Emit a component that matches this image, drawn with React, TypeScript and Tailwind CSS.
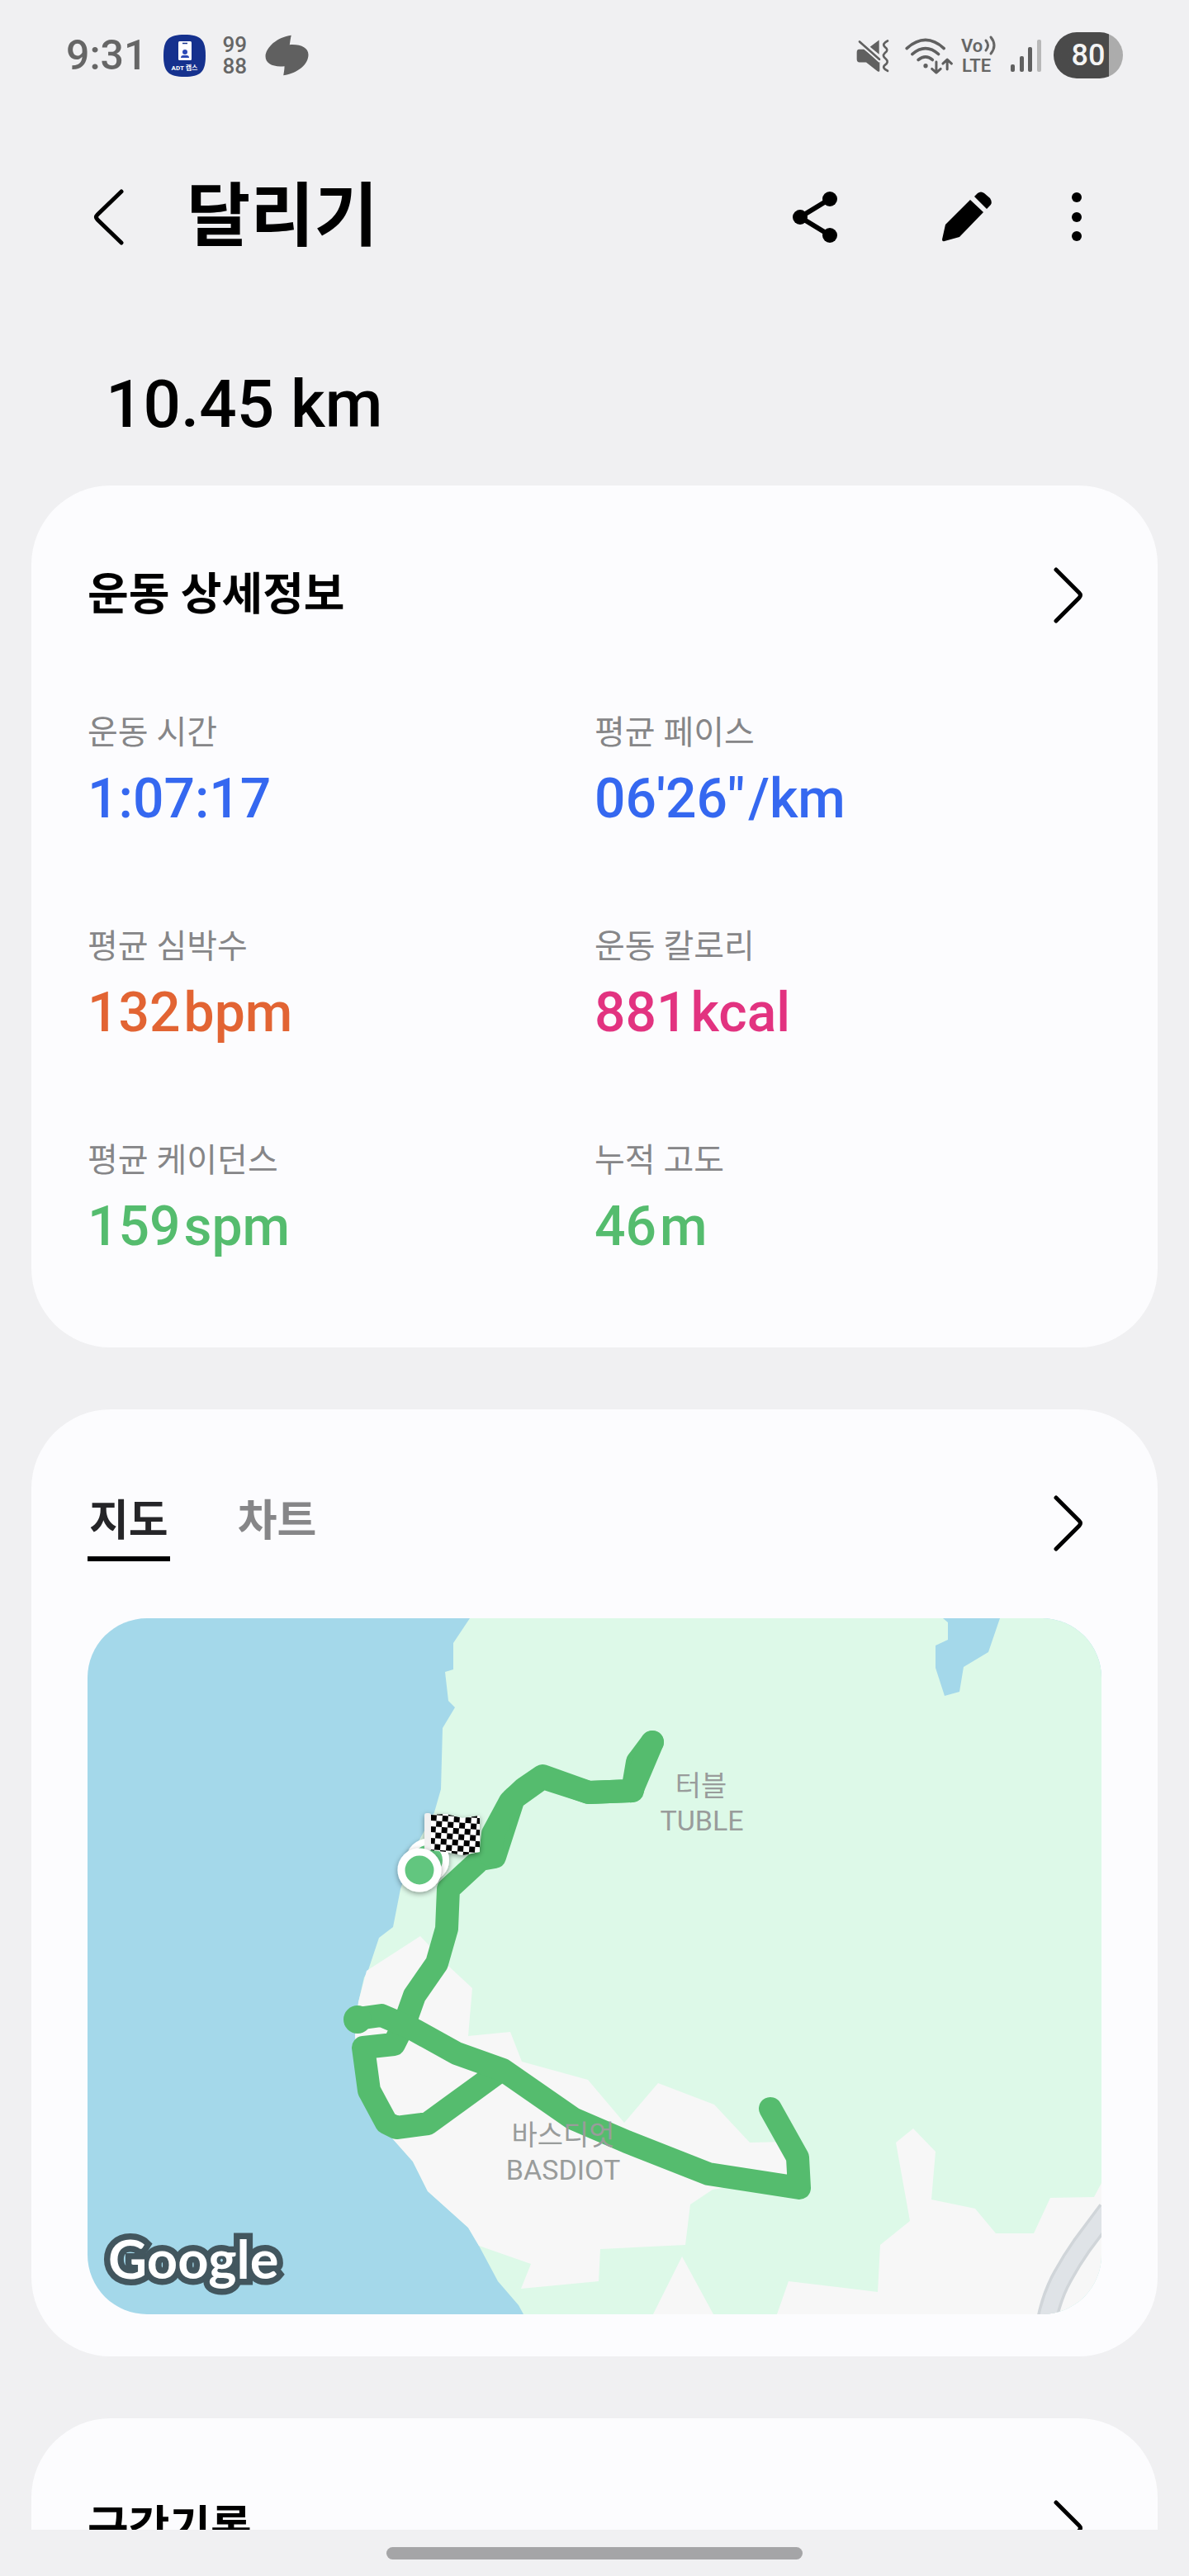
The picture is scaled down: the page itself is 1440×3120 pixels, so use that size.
import React from "react";

type Metric = { label: string; value: string; unit?: string; color: string };

const metrics: Metric[] = [
  { label: "운동 시간", value: "1:07:17", color: "text-[#3568f0]" },
  { label: "평균 페이스", value: "06'26\"", unit: "/km", color: "text-[#3568f0]" },
  { label: "평균 심박수", value: "132", unit: "bpm", color: "text-[#e26433]" },
  { label: "운동 칼로리", value: "881", unit: "kcal", color: "text-[#e23380]" },
  { label: "평균 케이던스", value: "159", unit: "spm", color: "text-[#55bc6e]" },
  { label: "누적 고도", value: "46", unit: "m", color: "text-[#55bc6e]" },
];

function ChevronRight() {
  return (
    <svg viewBox="0 0 36 68" className="h-[68px] w-9" fill="none" stroke="#000" strokeWidth="5" strokeLinecap="round" strokeLinejoin="round" aria-hidden="true">
      <path d="M3 3 L31 31 Q34 34 31 37 L3 65" />
    </svg>
  );
}

function CardLink({ label }: { label: string }) {
  return (
    <button type="button" aria-label={label} className="mr-[22px] h-[68px] shrink-0">
      <ChevronRight />
    </button>
  );
}

function StatusBar() {
  return (
    <div className="flex h-[134px] shrink-0 items-center justify-between pr-20 pl-20 text-[#666666]">
      <div className="flex items-center">
        <time className="text-[50px] leading-none font-medium">9:31</time>
        <svg viewBox="0 0 51 51" className="ml-5 size-[51px]" aria-label="ADT 캡스">
          <path d="M25.500 0C45 0 51 6 51 25.500S45 51 25.500 51 0 45 0 25.500 6 0 25.500 0Z" fill="#15318e" />
          <rect x="18" y="8" width="16" height="23" rx="1.500" fill="#fff" />
          <path d="M23 10.500h6" stroke="#15318e" strokeWidth="1.500" />
          <circle cx="26" cy="21" r="3" fill="#2b49b5" />
          <path d="M21 28q0-3 3-3h4q3 0 3 3z" fill="#2b49b5" />
          <text x="25.500" y="43" textAnchor="middle" fontSize="8" fontWeight="700" fill="#fff">ADT 캡스</text>
        </svg>
        <div className="ml-5 flex flex-col text-[26px] leading-[26px] font-medium">
          <span>99</span>
          <span>88</span>
        </div>
        <svg viewBox="400 36 160 152" className="ml-[22px] h-[50px] w-[53px]" fill="#606060" aria-hidden="true">
          <path d="M496 38C493 50 492 60 490 73C530 70 559 84 559 110C559 146 520 178 467 186C469 174 471 164 471 152C430 156 401 144 401 116C402 82 445 44 496 38Z" />
        </svg>
      </div>
      <div className="flex items-center">
        <svg viewBox="48 66 120 122" className="h-[41px] w-10" fill="#606060" aria-hidden="true">
          <path d="M131 70V122L98 95Z" />
          <path d="M58 104H76L133 150V180Q133 188 125 183L84 151H60Q50 151 50 140V115Q50 104 58 104Z" />
          <path d="M60 76L136 146" stroke="#f0f0f2" strokeWidth="16" />
          <path d="M60 76L132 140" stroke="#606060" strokeWidth="8" strokeLinecap="round" />
          <path d="M162 73Q140 84 152 95Q168 106 152 117Q140 128 156 139Q168 150 152 161Q140 172 162 182" fill="none" stroke="#606060" strokeWidth="8" strokeLinecap="round" />
        </svg>
        <svg viewBox="220 56 180 136" className="ml-[18px] h-[45px] w-[60px]" fill="none" stroke="#606060" strokeWidth="11" strokeLinecap="round" strokeLinejoin="round" aria-hidden="true">
          <path d="M229 97Q298 36 365 97" />
          <path d="M249 118Q298 76 345 118" />
          <path d="M271 139Q298 118 323 139" />
          <circle cx="298" cy="161" r="8" fill="#606060" stroke="none" />
          <path d="M337 147V184M321 172L337 186L353 172M377 174V140M361 153L377 138L393 153" strokeWidth="9" />
        </svg>
        <svg viewBox="0 0 44 48" className="ml-2 h-12 w-11 overflow-visible" aria-label="VoLTE">
          <g fill="#666" fontSize="22" fontWeight="600" className="font-[Roboto]">
            <text x="1" y="20">Vo</text>
            <text x="2" y="44">LTE</text>
          </g>
          <path d="M31 6Q36 12 31 18M37 2Q45 12 37 22" fill="none" stroke="#666" strokeWidth="3" strokeLinecap="round" />
        </svg>
        <svg viewBox="0 0 38 41" className="ml-4 h-[41px] w-[38px]" aria-hidden="true">
          <g fill="#606060">
            <rect x="1" y="31" width="5" height="9" rx="2" />
            <rect x="12" y="21" width="5" height="19" rx="2" />
            <rect x="22" y="10" width="5" height="30" rx="2" />
          </g>
          <rect x="33" y="1" width="5" height="39" rx="2" fill="#b8b8b8" />
        </svg>
        <div className="ml-[15px] flex h-14 w-[84px] items-center justify-center rounded-full bg-linear-to-r from-[#4a4a4a] from-80% to-[#acacac] to-80% text-4xl font-medium text-[#f4f4f4]">
          80
        </div>
      </div>
    </div>
  );
}

function AppBar() {
  return (
    <header className="flex h-[258px] shrink-0 items-center pr-[104px] pl-[112px]">
      <button type="button" aria-label="뒤로" className="h-[68px] w-10">
        <svg viewBox="0 0 40 68" className="h-[68px] w-10" fill="none" stroke="#000" strokeWidth="5" strokeLinecap="round" strokeLinejoin="round">
          <path d="M35 3 L6 31 Q3 34 6 37 L35 65" />
        </svg>
      </button>
      <h1 className="ml-[74px] text-[84px] leading-[96px] font-bold">달리기</h1>
      <div className="ml-auto flex items-center">
        <button type="button" aria-label="공유" className="size-16">
          <svg viewBox="0 0 64 64" className="size-16">
            <path d="M50 10L14 32L50 54" fill="none" stroke="#000" strokeWidth="6" />
            <circle cx="50" cy="10" r="9" />
            <circle cx="14" cy="32" r="9" />
            <circle cx="50" cy="54" r="9" />
          </svg>
        </button>
        <button type="button" aria-label="편집" className="ml-[120px] size-16">
          <svg viewBox="0 0 64 64" className="size-16">
            <path d="M36 11L52 26L23 56L5 61Q2 62 2 59L6 41Z" />
            <path d="M41 7L45 3Q49 0 53 3L60 9Q64 15 59 19L56 22Z" />
          </svg>
        </button>
        <button type="button" aria-label="더보기" className="ml-[69px] size-16">
          <svg viewBox="0 0 64 64" className="size-16">
            <circle cx="32" cy="8" r="6" />
            <circle cx="32" cy="32" r="6" />
            <circle cx="32" cy="55" r="6" />
          </svg>
        </button>
      </div>
    </header>
  );
}

function RouteMap() {
  return (
    <svg viewBox="106 1960 1228 843" className="mt-[69px] block w-full rounded-[72px]" role="img" aria-label="달리기 경로 지도">
      <defs>
        <pattern id="checker" width="14" height="14" patternUnits="userSpaceOnUse" patternTransform="translate(522 2198) rotate(4)">
          <rect width="14" height="14" fill="#fff" />
          <path d="M0 0h7v7h-7zM7 7h7v7h-7z" fill="#000" />
        </pattern>
        <filter id="lift" x="-30%" y="-30%" width="160%" height="160%">
          <feDropShadow dx="0" dy="2" stdDeviation="3" floodOpacity="0.400" />
        </filter>
      </defs>
      <rect x="106" y="1960" width="1228" height="843" fill="#a4d8ea" />
      <path
        fill="#ddf9e8"
        d="M569 1960L549 1990V2022L539 2025L543 2060L551 2068L536 2093L534 2167L526 2195L500 2243L485 2288L476 2334L459 2347L446 2386L441 2395L434 2425L430 2466L437 2524L476 2591L500 2618L518 2654L567 2698L580 2720L603 2763L628 2792L634 2803H1334V1960Z"
      />
      <path fill="#a4d8ea" d="M1142 1960L1148 1965V1986L1133 1993V2020L1144 2054L1162 2049L1167 2019L1197 2001L1211 1960Z" />
      <g fill="#f7f7f7">
        <path d="M444 2387L509 2345L544 2382L572 2408L567 2466L618 2461L632 2497L712 2519L756 2571L797 2523L865 2549L908 2595L952 2594L955 2636L863 2652L836 2670L830 2719L727 2724L725 2763L631 2772L643 2742L580 2720L567 2698L518 2654L500 2618L476 2591L437 2524L430 2466L434 2425Z" />
        <path d="M791 2803L826 2733L864 2803Z" />
        <path d="M941 2803L955 2763L1063 2776L1066 2719L1102 2690L1085 2595L1106 2578L1133 2606L1128 2664L1181 2675L1206 2705H1252L1272 2662L1325 2661L1334 2644V2803Z" />
      </g>
      <g fill="none">
        <path d="M1268 2810Q1274 2780 1287 2757Q1298 2737 1310 2720L1342 2677" stroke="#d0d5d9" strokeWidth="26" />
        <path d="M1268 2810Q1274 2780 1287 2757Q1298 2737 1310 2720L1342 2677" stroke="#dfe3e7" strokeWidth="19" />
      </g>
      <g fill="none" stroke="#55bc6e" strokeWidth="28" strokeLinecap="round" strokeLinejoin="round">
        <path d="M790 2110L772 2134L766 2169L713 2171L657 2153L622 2178L599 2249L582 2252L543 2288L541 2336L529 2378L502 2417L491 2448L477 2476L440 2480L447 2532L468 2571L480 2577L518 2572L606 2508" />
        <path d="M790 2110L765 2169L713 2171L657 2151L635 2166L618 2182L597 2221L594 2247" />
        <path d="M433 2445L462 2441L497 2456L553 2487L609 2507L694 2566L759 2594L858 2633L968 2650L966 2613L933 2554" />
      </g>
      <circle cx="433" cy="2446" r="17" fill="#55bc6e" />
      <g filter="url(#lift)">
        <circle cx="518" cy="2253" r="22" fill="#62c67f" stroke="#fff" strokeWidth="8" />
        <path d="M522 2198L540 2197L560 2202L581 2199V2243L560 2247L540 2243L522 2241Z" fill="url(#checker)" />
        <rect x="514" y="2196" width="8" height="46" rx="3" fill="#f1f1f1" />
      </g>
      <circle cx="508" cy="2265" r="22" fill="#62c67f" stroke="#fff" strokeWidth="9" filter="url(#lift)" />
      <g fill="#999c9b" fontSize="34" textAnchor="middle">
        <text x="849" y="2175">터블</text>
        <text x="850" y="2217">TUBLE</text>
        <text x="682" y="2598">바스디엇</text>
        <text x="682" y="2640">BASDIOT</text>
      </g>
      <text
        x="131"
        y="2760"
        className="font-[Lato]"
        fontSize="65"
        fontWeight="700"
        fill="#fff"
        stroke="#42565e"
        strokeWidth="15"
        paintOrder="stroke"
      >
        Google
      </text>
    </svg>
  );
}

export default function App() {
  return (
    <div className="flex h-screen flex-col bg-[#f0f0f2] font-[Roboto,'Noto_Sans_CJK_KR',sans-serif] text-black">
      <StatusBar />
      <AppBar />
      <main className="flex min-h-0 flex-1 flex-col overflow-hidden px-[38px]">
        <p className="flex h-[196px] shrink-0 items-center pl-[90px] text-[80px] leading-none font-medium">10.45 km</p>

        <section className="shrink-0 rounded-[96px] bg-[#fcfcfe] px-[68px] pt-[99px] pb-[106px]">
          <div className="flex h-[68px] items-center justify-between">
            <h2 className="text-[54px] leading-[60px] font-bold">운동 상세정보</h2>
            <CardLink label="운동 상세정보 보기" />
          </div>
          <dl className="mt-[105px] grid grid-cols-2 gap-y-[111px]">
            {metrics.map((m) => (
              <div key={m.label} className="flex flex-col gap-3">
                <dt className="text-[40px] leading-14 text-[#868688]">{m.label}</dt>
                <dd className={`flex gap-1 text-[66px] leading-20 font-medium ${m.color}`}>
                  <span>{m.value}</span>
                  {m.unit && <span>{m.unit}</span>}
                </dd>
              </div>
            ))}
          </dl>
        </section>

        <section className="mt-[75px] shrink-0 rounded-[96px] bg-[#fcfcfe] px-[68px] pt-[104px] pb-[51px]">
          <div className="flex items-start justify-between">
            <div role="tablist" className="flex gap-[82px] text-[52px] leading-[64px] font-bold">
              <button type="button" role="tab" aria-selected="true" className="border-b-[6px] border-black px-0.5 pb-2.5 text-[#252528]">
                지도
              </button>
              <button type="button" role="tab" aria-selected="false" className="border-b-[6px] border-transparent pb-2.5 text-[#868688]">
                차트
              </button>
            </div>
            <CardLink label="지도 보기" />
          </div>
          <RouteMap />
        </section>

        <section className="mt-[75px] shrink-0 rounded-[96px] bg-[#fcfcfe] px-[68px] pt-[99px] pb-[106px]">
          <div className="flex h-[68px] items-center justify-between">
            <h2 className="text-[54px] leading-[60px] font-bold">구간기록</h2>
            <CardLink label="구간기록 보기" />
          </div>
        </section>
      </main>
      <div className="flex h-14 shrink-0 justify-center pt-[21px]">
        <div className="h-[15px] w-[35%] rounded-full bg-[#a5a5a7]" />
      </div>
    </div>
  );
}
